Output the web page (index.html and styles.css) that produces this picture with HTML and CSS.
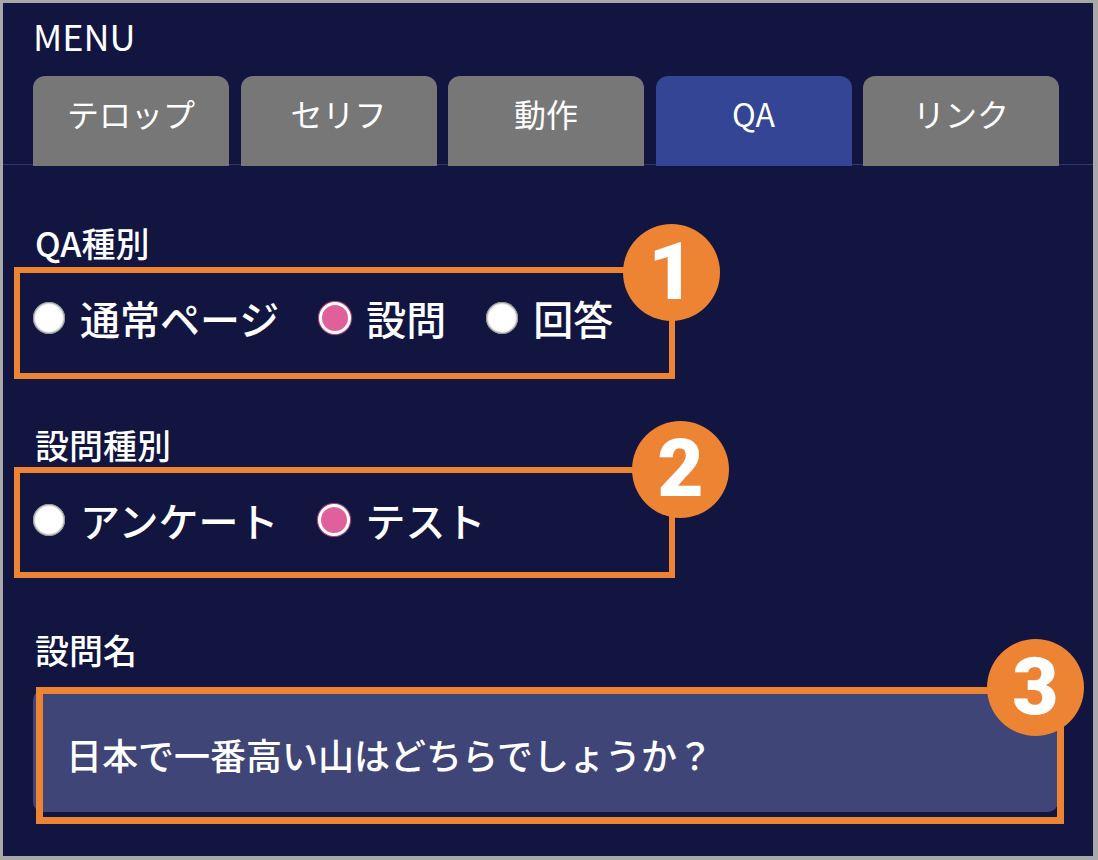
FILE: index.html
```html
<!DOCTYPE html>
<html lang="ja">
<head>
    <meta charset="UTF-8" />
    <meta name="viewport" content="width=device-width, initial-scale=1.0" />
    <title>MENU - QA</title>
    <link rel="stylesheet" href="styles.css">
</head>
<body>

<div class="panel">
    <div class="menu-title">MENU</div>

    <div class="tabs">
        <div class="tab">テロップ</div>
        <div class="tab">セリフ</div>
        <div class="tab">動作</div>
        <div class="tab active">QA</div>
        <div class="tab">リンク</div>
    </div>

    <div class="qa-form">
        <div class="field-label">QA種別</div>
        <div class="radio-group">
            <label class="radio"><span class="dot"></span>通常ページ</label>
            <label class="radio"><span class="dot checked"></span>設問</label>
            <label class="radio"><span class="dot"></span>回答</label>
            <span class="badge">1</span>
        </div>

        <div class="field-label label-gap">設問種別</div>
        <div class="radio-group group-2">
            <label class="radio"><span class="dot"></span>アンケート</label>
            <label class="radio"><span class="dot checked"></span>テスト</label>
            <span class="badge badge-2">2</span>
        </div>

        <div class="field-label label-gap label-name">設問名</div>
        <div class="text-field">
            <div class="text-input">日本で一番高い山はどちらでしょうか？</div>
            <span class="badge badge-3">3</span>
        </div>
    </div>
</div>

</body>
</html>
```

FILE: styles.css
```css
html, body {
    margin: 0;
    padding: 0;
}

body {
    width: 1098px;
    height: 860px;
    font-family: "Noto Sans CJK JP", "Noto Sans", sans-serif;
    font-weight: 500;
    color: #ffffff;
}

.panel {
    box-sizing: border-box;
    width: 1098px;
    height: 860px;
    background-color: #11153f;
    border-style: solid;
    border-color: #a8a8a8;
    border-width: 3px 5px 4px 3px;
}

.menu-title {
    font-size: 36px;
    font-weight: 400;
    line-height: 36px;
    padding: 14px 0 0 30px;
}

/* tab bar */
.tabs {
    display: flex;
    gap: 11.5px;
    margin-top: 23px;
    padding-left: 30px;
    border-bottom: 1px solid #2f3672;
}

.tab {
    width: 196px;
    height: 90px;
    margin-bottom: -2px;
    box-sizing: border-box;
    padding-top: 21px;
    background-color: #777777;
    border-radius: 12px 12px 0 0;
    font-size: 32px;
    font-weight: 400;
    line-height: 32px;
    text-align: center;
}

.tab.active {
    background-color: #334594;
}

/* form */
.qa-form {
    padding-left: 11px;
}

.field-label {
    margin: 61px 0 7px 21px;
    font-size: 34px;
    line-height: 34px;
}

.label-gap {
    margin-top: 49px;
    margin-bottom: 5px;
}

.label-name {
    margin-top: 55px;
    margin-bottom: 23px;
}

.radio-group {
    position: relative;
    width: 661px;
    box-sizing: border-box;
    display: flex;
    align-items: center;
    padding: 25px 13px 35px;
    border: 6px solid #ec8433;
}

.group-2 {
    padding-top: 27px;
    padding-bottom: 32px;
}

.radio {
    display: flex;
    align-items: center;
    gap: 15px;
    margin-right: 40px;
    font-size: 40px;
    line-height: 40px;
}

.dot {
    width: 32px;
    height: 32px;
    box-sizing: border-box;
    border-radius: 50%;
    background-color: #ffffff;
    box-shadow: inset 0 0 2px 1px #7a7a7a;
}

.dot.checked {
    background-color: #e0609b;
    border: 3px solid #ffffff;
    box-shadow: 0 0 1px 1px #c8508a;
}

.badge {
    position: absolute;
    top: -49px;
    right: -51px;
    width: 97px;
    height: 97px;
    border-radius: 50%;
    background-color: #ec8433;
    color: #ffffff;
    font-family: "Roboto", "Liberation Sans", sans-serif;
    font-weight: 900;
    font-size: 80px;
    line-height: 97px;
    text-align: center;
    z-index: 2;
}

.badge-2 {
    top: -52px;
    right: -60px;
}

/* question name */
.text-field {
    position: relative;
    width: 1025px;
    margin-left: 19px;
}

.text-input {
    box-sizing: border-box;
    height: 122px;
    padding: 46px 0 0 33px;
    background-color: #3f4677;
    border-radius: 10px;
    font-size: 36px;
    line-height: 36px;
}

.text-field::after {
    content: "";
    position: absolute;
    left: 3px;
    top: -3px;
    right: -6px;
    bottom: -12px;
    border: 7px solid #ec8433;
    z-index: 1;
}

.badge-3 {
    top: -51px;
    right: -26px;
}
```
